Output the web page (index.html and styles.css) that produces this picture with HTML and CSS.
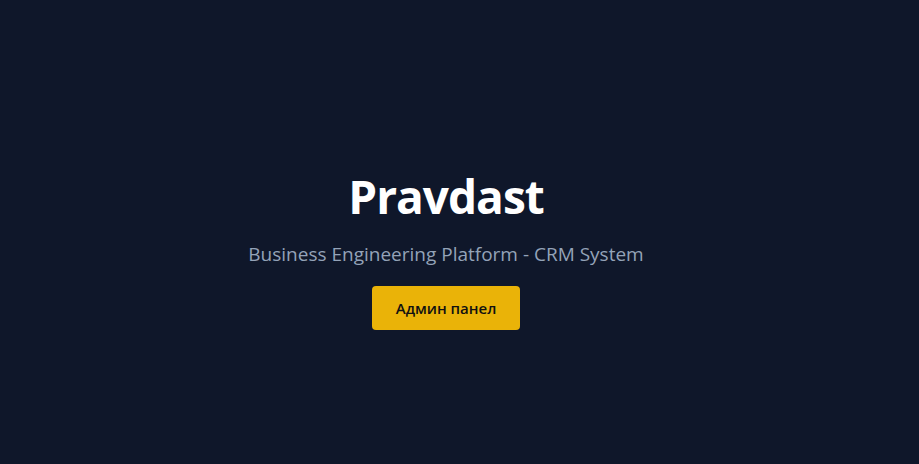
FILE: index.html
```html
<!DOCTYPE html>
<html lang="bg">
<head>
<meta charset="utf-8">
<title>Pravdast</title>
<link rel="stylesheet" href="styles.css">
</head>
<body>
<main class="hero">
  <h1 class="title">Pravdast</h1>
  <p class="subtitle">Business Engineering Platform - CRM System</p>
  <a class="btn" href="#">Админ панел</a>
</main>
</body>
</html>
```
FILE: styles.css
```css
html, body {
  margin: 0;
  padding: 0;
  height: 100%;
}
body {
  background: #0f172a;
  font-family: "Open Sans", "Noto Sans", sans-serif;
}
.hero {
  box-sizing: border-box;
  min-height: 100vh;
  padding: 38px 27px 0 0;
  display: flex;
  flex-direction: column;
  align-items: center;
  justify-content: center;
  text-align: center;
}
.title {
  margin: 0 0 20px;
  font-size: 46px;
  letter-spacing: -1px;
  line-height: 48px;
  font-weight: 700;
  color: #ffffff;
}
.subtitle {
  margin: 0 0 18px;
  font-size: 19px;
  line-height: 28px;
  color: #94a3b8;
}
.btn {
  display: inline-block;
  background: #eab308;
  color: #111111;
  text-decoration: none;
  font-size: 15px;
  font-weight: 600;
  line-height: 24px;
  padding: 10px 24px;
  border-radius: 4px;
}
```
